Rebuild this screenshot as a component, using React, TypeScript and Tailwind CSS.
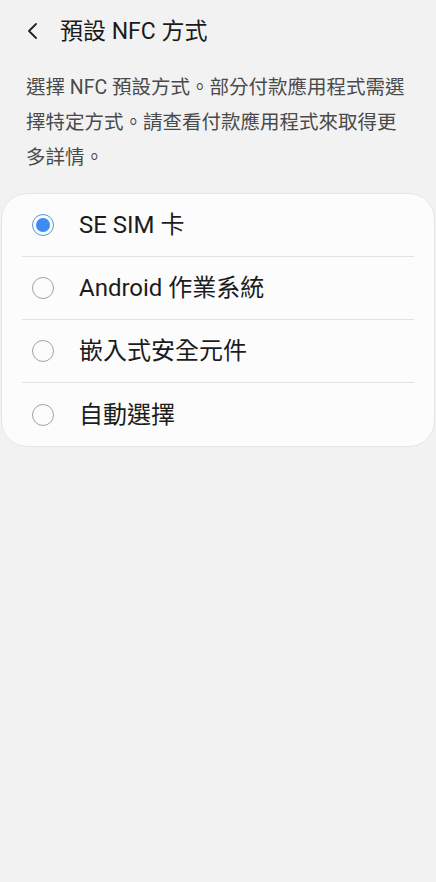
const font = { fontFamily: '"Roboto", "Noto Sans CJK TC", sans-serif' };

const options = ["SE SIM 卡", "Android 作業系統", "嵌入式安全元件", "自動選擇"];

function Radio({ checked }: { checked: boolean }) {
  if (checked) {
    return (
      <div className="flex h-[22px] w-[22px] items-center justify-center rounded-full border-[1.5px] border-[#5b95e0]">
        <div className="h-[14px] w-[14px] rounded-full bg-[#3d8bf5]" />
      </div>
    );
  }
  return <div className="h-[22px] w-[22px] rounded-full border-[1.5px] border-[#a3a3a3]" />;
}

export default function App() {
  return (
    <div className="flex min-h-[882px] w-full flex-col bg-[#f2f2f2] text-[#1a1a1a]" style={font}>
      <div className="flex h-[62px] items-center pl-[26px]">
        <svg width="14" height="18" viewBox="0 0 14 18" className="mt-[-1px]">
          <path d="M10 2 L3 9 L10 16" fill="none" stroke="#222" strokeWidth="1.8" strokeLinecap="round" strokeLinejoin="round" />
        </svg>
        <h1 className="ml-[20px] text-[23px] font-normal leading-none">預設 NFC 方式</h1>
      </div>

      <p className="mt-[8px] pl-[26px] pr-[6px] text-[19.5px] leading-[35px] text-[#4a4a4a]">
        選擇 NFC 預設方式。部分付款應用程式需選
        <br />
        擇特定方式。請查看付款應用程式來取得更
        <br />
        多詳情。
      </p>

      <div className="mx-[1px] mt-[18px] rounded-[26px] border border-[#e6e6e6] bg-[#fcfcfc] px-[20px]">
        {options.map((label, i) => (
          <div
            key={label}
            className={`flex h-[63px] items-center ${i < options.length - 1 ? "border-b border-[#e2e2e2]" : ""}`}
          >
            <div className="ml-[10px] flex w-[22px] justify-center">
              <Radio checked={i === 0} />
            </div>
            <span className="ml-[25px] text-[24px] leading-none text-[#1c1c1c]">{label}</span>
          </div>
        ))}
      </div>
    </div>
  );
}
